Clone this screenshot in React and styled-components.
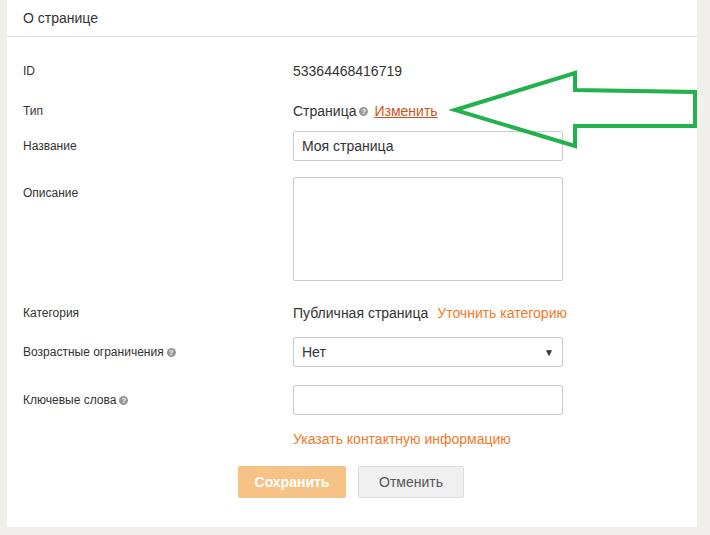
import React from 'react';
import styled, { createGlobalStyle } from 'styled-components';

const Global = createGlobalStyle`
  html, body { margin: 0; padding: 0; background: #f0efeb; }
  body { font-family: "Liberation Sans", Arial, sans-serif; color: #333; }
`;

const Page = styled.div`
  position: relative;
  width: 710px;
  height: 535px;
  padding: 0 13px 0 7px;
  box-sizing: border-box;
`;

const Panel = styled.div`
  background: #fff;
  height: 527px;
`;

const Header = styled.div`
  height: 36px;
  border-bottom: 1px solid #e3e3e3;
  padding-left: 16px;
  display: flex;
  align-items: center;
  font-size: 14px;
  color: #333;
`;

const Form = styled.div`
  padding: 14px 0 0 16px;
`;

const Row = styled.div`
  display: grid;
  grid-template-columns: 270px 270px;
  align-items: ${(p) => (p.$top ? 'start' : 'center')};
  min-height: ${(p) => p.$h || 40}px;
  margin-bottom: ${(p) => p.$mb || 0}px;
`;

const Label = styled.div`
  font-size: 12px;
  color: #333;
  display: flex;
  align-items: center;
  padding-top: ${(p) => p.$pt || 0}px;
`;

const Value = styled.div`
  font-size: 14px;
  color: #333;
  display: flex;
  align-items: center;
  white-space: nowrap;
`;

const Help = styled.span`
  display: inline-flex;
  align-items: center;
  justify-content: center;
  width: 9px;
  height: 9px;
  border-radius: 50%;
  background: #999;
  color: #fff;
  font-size: 7px;
  font-weight: bold;
  margin: 0 4px 0 3px;
`;

const Link = styled.a`
  color: ${(p) => (p.$dark ? '#d4531a' : '#f07a2a')};
  text-decoration: ${(p) => (p.$dark ? 'underline' : 'none')};
  margin-left: ${(p) => p.$ml || 0}px;
  font-size: 14px;
  cursor: pointer;
`;

const Input = styled.div`
  width: 270px;
  height: ${(p) => p.$h || 30}px;
  box-sizing: border-box;
  border: 1px solid #ccc;
  border-radius: 2px;
  padding: 0 8px;
  font-size: 14px;
  display: flex;
  align-items: center;
  justify-content: space-between;
  color: #333;
`;

const Buttons = styled.div`
  display: flex;
  gap: 12px;
  padding-left: 215px;
  margin-top: 13px;
`;

const Button = styled.button`
  height: 32px;
  width: ${(p) => p.$w}px;
  border-radius: 2px;
  font-family: inherit;
  font-size: 14px;
  border: ${(p) => (p.$primary ? 'none' : '1px solid #ddd')};
  background: ${(p) => (p.$primary ? '#f6c285' : '#f0f0f0')};
  color: ${(p) => (p.$primary ? '#fff' : '#555')};
  font-weight: ${(p) => (p.$primary ? 'bold' : 'normal')};
`;

const Arrow = styled.svg`
  position: absolute;
  left: 0;
  top: 0;
  pointer-events: none;
`;

export default function App() {
  return (
    <Page>
      <Global />
      <Panel>
        <Header>О странице</Header>
        <Form>
          <Row><Label>ID</Label><Value>53364468416719</Value></Row>
          <Row>
            <Label>Тип</Label>
            <Value>Страница<Help>?</Help><Link $dark $ml={2}>Изменить</Link></Value>
          </Row>
          <Row $h={30} $mb={16}>
            <Label>Название</Label>
            <Input>Моя страница</Input>
          </Row>
          <Row $top $h={104} $mb={17}>
            <Label $pt={9}>Описание</Label>
            <Input $h={104} />
          </Row>
          <Row $h={30} $mb={9}>
            <Label>Категория</Label>
            <Value>Публичная страница<Link $ml={9}>Уточнить категорию</Link></Value>
          </Row>
          <Row $h={30} $mb={18}>
            <Label>Возрастные ограничения<Help>?</Help></Label>
            <Input>Нет<span style={{ fontSize: 10 }}>▼</span></Input>
          </Row>
          <Row $h={30} $mb={10}>
            <Label>Ключевые слова<Help>?</Help></Label>
            <Input />
          </Row>
          <Row $h={28}>
            <span />
            <Value><Link>Указать контактную информацию</Link></Value>
          </Row>
          <Buttons>
            <Button $primary $w={108}>Сохранить</Button>
            <Button $w={106}>Отменить</Button>
          </Buttons>
        </Form>
      </Panel>
      <Arrow width="710" height="535">
        <polygon
          points="455,110 575,73 575,90 695,92 695,126 575,126 575,146"
          fill="none"
          stroke="#22b14c"
          strokeWidth="4"
          strokeLinejoin="miter"
        />
      </Arrow>
    </Page>
  );
}
